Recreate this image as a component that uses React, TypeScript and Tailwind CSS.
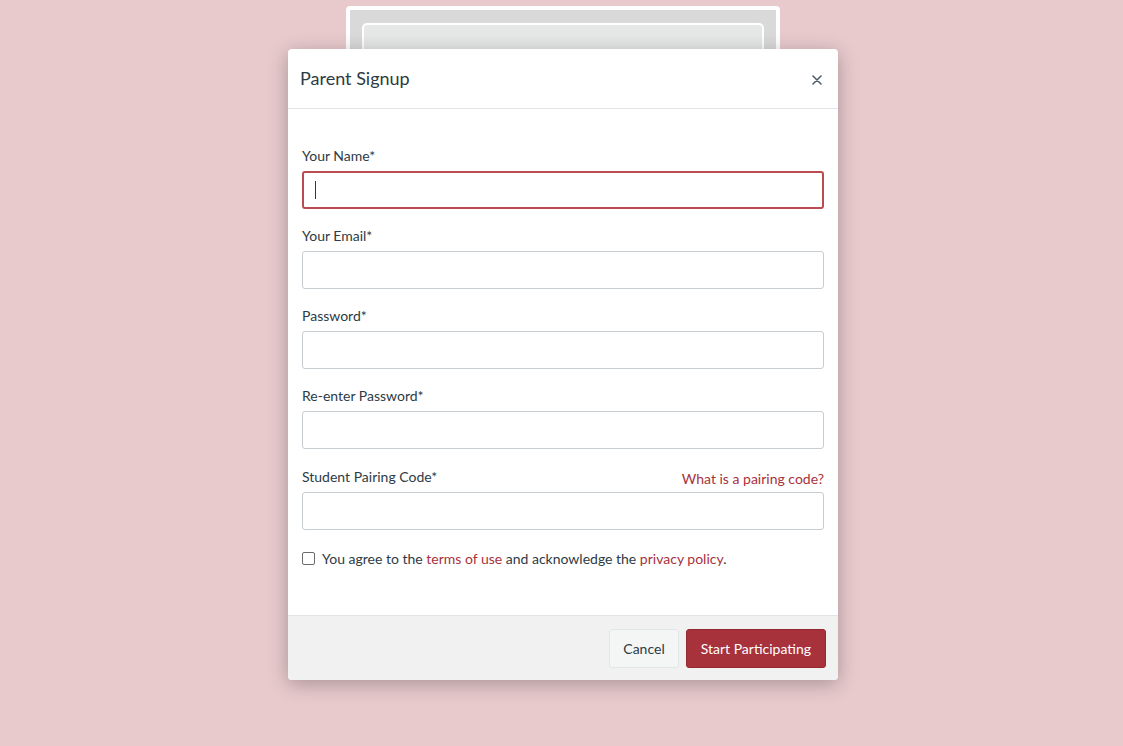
import React from "react";

function Field({ label, focused, extra, gapTop }: { label: string; focused?: boolean; extra?: React.ReactNode; gapTop?: string }) {
  return (
    <div className={"flex flex-col " + (gapTop || "")}>
      <div className="flex items-end justify-between h-[20px]">
        <span className="text-[14px] text-[#2d3b45] leading-[20px]">{label}</span>
        {extra}
      </div>
      <div
        className={
          "mt-[5px] h-[38px] rounded-[3px] bg-white flex items-center px-[12px] " +
          (focused ? "border-2 border-[#b84c51]" : "border border-[#c7cdd1]")
        }
      >
        {focused && <div className="w-px h-[18px] bg-[#2d3b45] ml-[-1px]" />}
      </div>
    </div>
  );
}

export default function App() {
  return (
    <div
      className="relative w-[1123px] h-[746px] bg-[#e8cacd] overflow-hidden"
      style={{ fontFamily: "Lato, 'Open Sans', sans-serif" }}
    >
      {/* Background page card behind overlay */}
      <div className="absolute left-[346px] top-[6px] w-[434px] h-[200px] rounded-[4px] bg-white p-[4px]">
        <div className="w-full h-full bg-[#d9d9d9] pt-[13px] px-[12px]">
          <div className="w-full h-full rounded-[5px] border-2 border-white bg-[#e6e7e7]" />
        </div>
      </div>

      {/* Modal */}
      <div className="relative ml-[288px] mt-[49px] w-[550px] rounded-[4px] bg-white shadow-[0_4px_20px_rgba(0,0,0,0.28)] overflow-hidden">
        <div className="h-[60px] flex items-center justify-between pl-[12px] pr-[16px] border-b border-[#e2e4e6]">
          <h2 className="text-[18px] text-[#2d3b45] font-normal">Parent Signup</h2>
          <svg width="10" height="10" viewBox="0 0 10 10" className="mt-[2px]">
            <path d="M1 1 L9 9 M9 1 L1 9" stroke="#505e69" strokeWidth="1.6" strokeLinecap="round" />
          </svg>
        </div>
        <div className="px-[14px] pt-[37px] pb-[46px]">
          <div className="flex flex-col gap-[17px]">
            <Field label="Your Name*" focused />
            <Field label="Your Email*" />
            <Field label="Password*" />
            <Field label="Re-enter Password*" />
            <Field
              label="Student Pairing Code*"
              gapTop="mt-[1px]"
              extra={<span className="text-[14px] text-[#a8323c] leading-[20px] translate-y-[2px]">What is a pairing code?</span>}
            />
          </div>
          <div className="mt-[18px] flex items-center gap-[7px] text-[14px] text-[#2d3b45]">
            <div className="w-[13px] h-[13px] rounded-[2px] border border-[#6b6b6b] bg-white" />
            <span>
              You agree to the <span className="text-[#a8323c]">terms of use</span> and acknowledge the{" "}
              <span className="text-[#a8323c]">privacy policy</span>.
            </span>
          </div>
        </div>
        <div className="h-[65px] bg-[#f1f1f1] border-t border-[#e2e4e6] flex items-center justify-end gap-[7px] pr-[12px]">
          <button className="h-[39px] px-[13px] rounded-[3px] border border-[#e3e6e7] bg-[#f4f5f5] text-[14px] text-[#2d3b45]">
            Cancel
          </button>
          <button className="h-[39px] px-[14px] rounded-[3px] border border-[#96262f] bg-[#a8323c] text-[14px] text-white">
            Start Participating
          </button>
        </div>
      </div>
    </div>
  );
}
